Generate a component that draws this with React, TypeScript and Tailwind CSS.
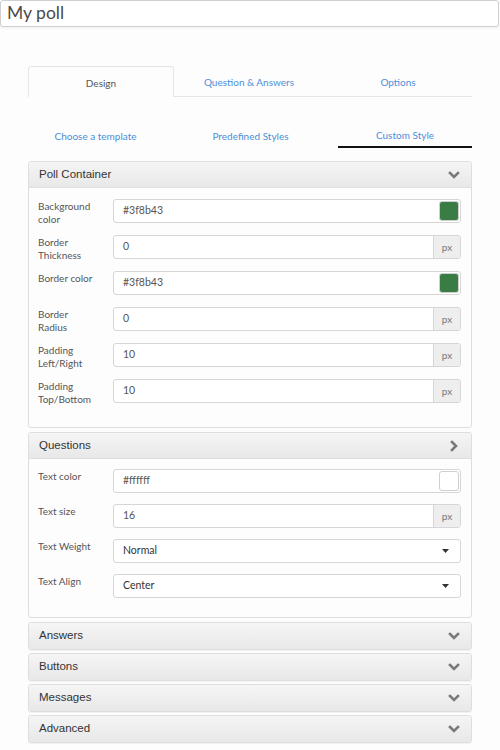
import React from "react";

const sans = { fontFamily: 'Lato, "Open Sans", sans-serif' };
const arial = { fontFamily: '"Liberation Sans", Arial, sans-serif' };

function Chevron({ dir = "down" }: { dir?: "down" | "right" }) {
  return (
    <svg width="12" height="12" viewBox="0 0 12 12" className="shrink-0">
      {dir === "down" ? (
        <polyline points="2,4 6,8 10,4" fill="none" stroke="#7a7a7a" strokeWidth="2.6" strokeLinecap="square" />
      ) : (
        <polyline points="4,2 8,6 4,10" fill="none" stroke="#7a7a7a" strokeWidth="2.6" strokeLinecap="square" />
      )}
    </svg>
  );
}

function PanelHeader({ title, dir = "down", open = false }: { title: string; dir?: "down" | "right"; open?: boolean }) {
  return (
    <div
      className={`h-[26px] flex items-center justify-between pl-[10px] pr-[11px] bg-gradient-to-b from-[#f6f5f6] to-[#e9e8e9] ${open ? "border-b border-[#dedede]" : ""}`}
    >
      <span className="text-[11.5px] text-[#333]" style={arial}>{title}</span>
      <Chevron dir={dir} />
    </div>
  );
}

function Label({ lines }: { lines: string[] }) {
  return (
    <div className="w-[75px] shrink-0 pt-[1px] text-[10px] leading-[13px] text-[#555]" style={sans}>
      {lines.map((l) => (
        <div key={l}>{l}</div>
      ))}
    </div>
  );
}

function ColorField({ value, swatch }: { value: string; swatch: string }) {
  return (
    <div className="flex-1 h-[24px] border border-[#d6d6d6] rounded-[3px] bg-white flex items-center justify-between pl-[9px] pr-[1px]">
      <span className="text-[10.5px] text-[#555]" style={sans}>{value}</span>
      <span className="w-[20px] h-[20px] rounded-[3px] border border-[#cfcfcf]" style={{ backgroundColor: swatch }} />
    </div>
  );
}

function PxField({ value }: { value: string }) {
  return (
    <div className="flex-1 h-[24px] border border-[#d6d6d6] rounded-[3px] bg-white flex items-stretch overflow-hidden">
      <span className="flex-1 flex items-center pl-[9px] text-[10.5px] text-[#555]" style={sans}>{value}</span>
      <span className="w-[27px] bg-[#eeeeee] border-l border-[#d6d6d6] flex items-center justify-center text-[10px] text-[#777]" style={sans}>px</span>
    </div>
  );
}

function SelectField({ value }: { value: string }) {
  return (
    <div className="flex-1 h-[24px] border border-[#d6d6d6] rounded-[3px] bg-white flex items-center justify-between pl-[9px] pr-[11px]">
      <span className="text-[10.5px] text-[#333]" style={sans}>{value}</span>
      <svg width="7" height="4" viewBox="0 0 7 4">
        <polygon points="0,0 7,0 3.5,4" fill="#333" />
      </svg>
    </div>
  );
}

function Row({ lines, children }: { lines: string[]; children: React.ReactNode }) {
  return (
    <div className="flex items-start h-[24px] overflow-visible">
      <Label lines={lines} />
      {children}
    </div>
  );
}

export default function App() {
  return (
    <div className="w-[500px] min-h-[750px] bg-[#fefdfe]">
      {/* poll title */}
      <div className="w-[499px] h-[27px] border border-[#cfcfcf] rounded-[3px] bg-white flex items-center pl-[6px] shadow-[0_2px_2px_rgba(0,0,0,0.04)]">
        <span className="text-[17.5px] text-[#4a4a4a]" style={sans}>My poll</span>
      </div>

      <div className="ml-[28px] w-[444px] mt-[39px]">
        {/* main tabs */}
        <div className="flex h-[31px]">
          <div className="w-[146px] border border-b-0 border-[#e6e6e6] rounded-t-[3px] flex items-center justify-center pt-[2px] text-[10px] text-[#555]" style={sans}>
            Design
          </div>
          <div className="flex-1 flex border-b border-[#e6e6e6] pt-[2px]">
            <div className="w-[150px] flex items-center justify-center text-[10px] text-[#4b8fd9]" style={sans}>Question &amp; Answers</div>
            <div className="flex-1 flex items-center justify-center text-[10px] text-[#4b8fd9]" style={sans}>Options</div>
          </div>
        </div>

        {/* style sub tabs */}
        <div className="flex h-[24px] mt-[27px]">
          <div className="w-[135px] flex items-center justify-center pt-[1px] text-[10px] text-[#4b8fd9]" style={sans}>Choose a template</div>
          <div className="w-[175px] flex items-center justify-center pt-[1px] text-[10px] text-[#4b8fd9]" style={sans}>Predefined Styles</div>
          <div className="flex-1 flex items-center justify-center text-[10px] text-[#4b8fd9] border-b-2 border-[#111]" style={sans}>Custom Style</div>
        </div>

        {/* poll container panel */}
        <div className="mt-[13px] border border-[#dedede] rounded-[3px] overflow-hidden">
          <PanelHeader title="Poll Container" open />
          <div className="pt-[11px] pb-[24px] pl-[9px] pr-[10px] flex flex-col gap-[12px]">
            <Row lines={["Background", "color"]}>
              <ColorField value="#3f8b43" swatch="#3a7d44" />
            </Row>
            <Row lines={["Border", "Thickness"]}>
              <PxField value="0" />
            </Row>
            <Row lines={["Border color"]}>
              <ColorField value="#3f8b43" swatch="#3a7d44" />
            </Row>
            <Row lines={["Border", "Radius"]}>
              <PxField value="0" />
            </Row>
            <Row lines={["Padding", "Left/Right"]}>
              <PxField value="10" />
            </Row>
            <Row lines={["Padding", "Top/Bottom"]}>
              <PxField value="10" />
            </Row>
          </div>
        </div>

        {/* questions panel */}
        <div className="mt-[4px] border border-[#dedede] rounded-[3px] overflow-hidden">
          <PanelHeader title="Questions" dir="right" open />
          <div className="pt-[10px] pb-[19px] pl-[9px] pr-[10px] flex flex-col gap-[11px]">
            <Row lines={["Text color"]}>
              <ColorField value="#ffffff" swatch="#ffffff" />
            </Row>
            <Row lines={["Text size"]}>
              <PxField value="16" />
            </Row>
            <Row lines={["Text Weight"]}>
              <SelectField value="Normal" />
            </Row>
            <Row lines={["Text Align"]}>
              <SelectField value="Center" />
            </Row>
          </div>
        </div>

        {/* collapsed panels */}
        <div className="mt-[4px] flex flex-col gap-[3px]">
          {["Answers", "Buttons", "Messages", "Advanced"].map((t) => (
            <div key={t} className="border border-[#dedede] rounded-[3px] overflow-hidden shadow-[0_1px_1px_rgba(0,0,0,0.05)]">
              <PanelHeader title={t} />
            </div>
          ))}
        </div>
      </div>
    </div>
  );
}
